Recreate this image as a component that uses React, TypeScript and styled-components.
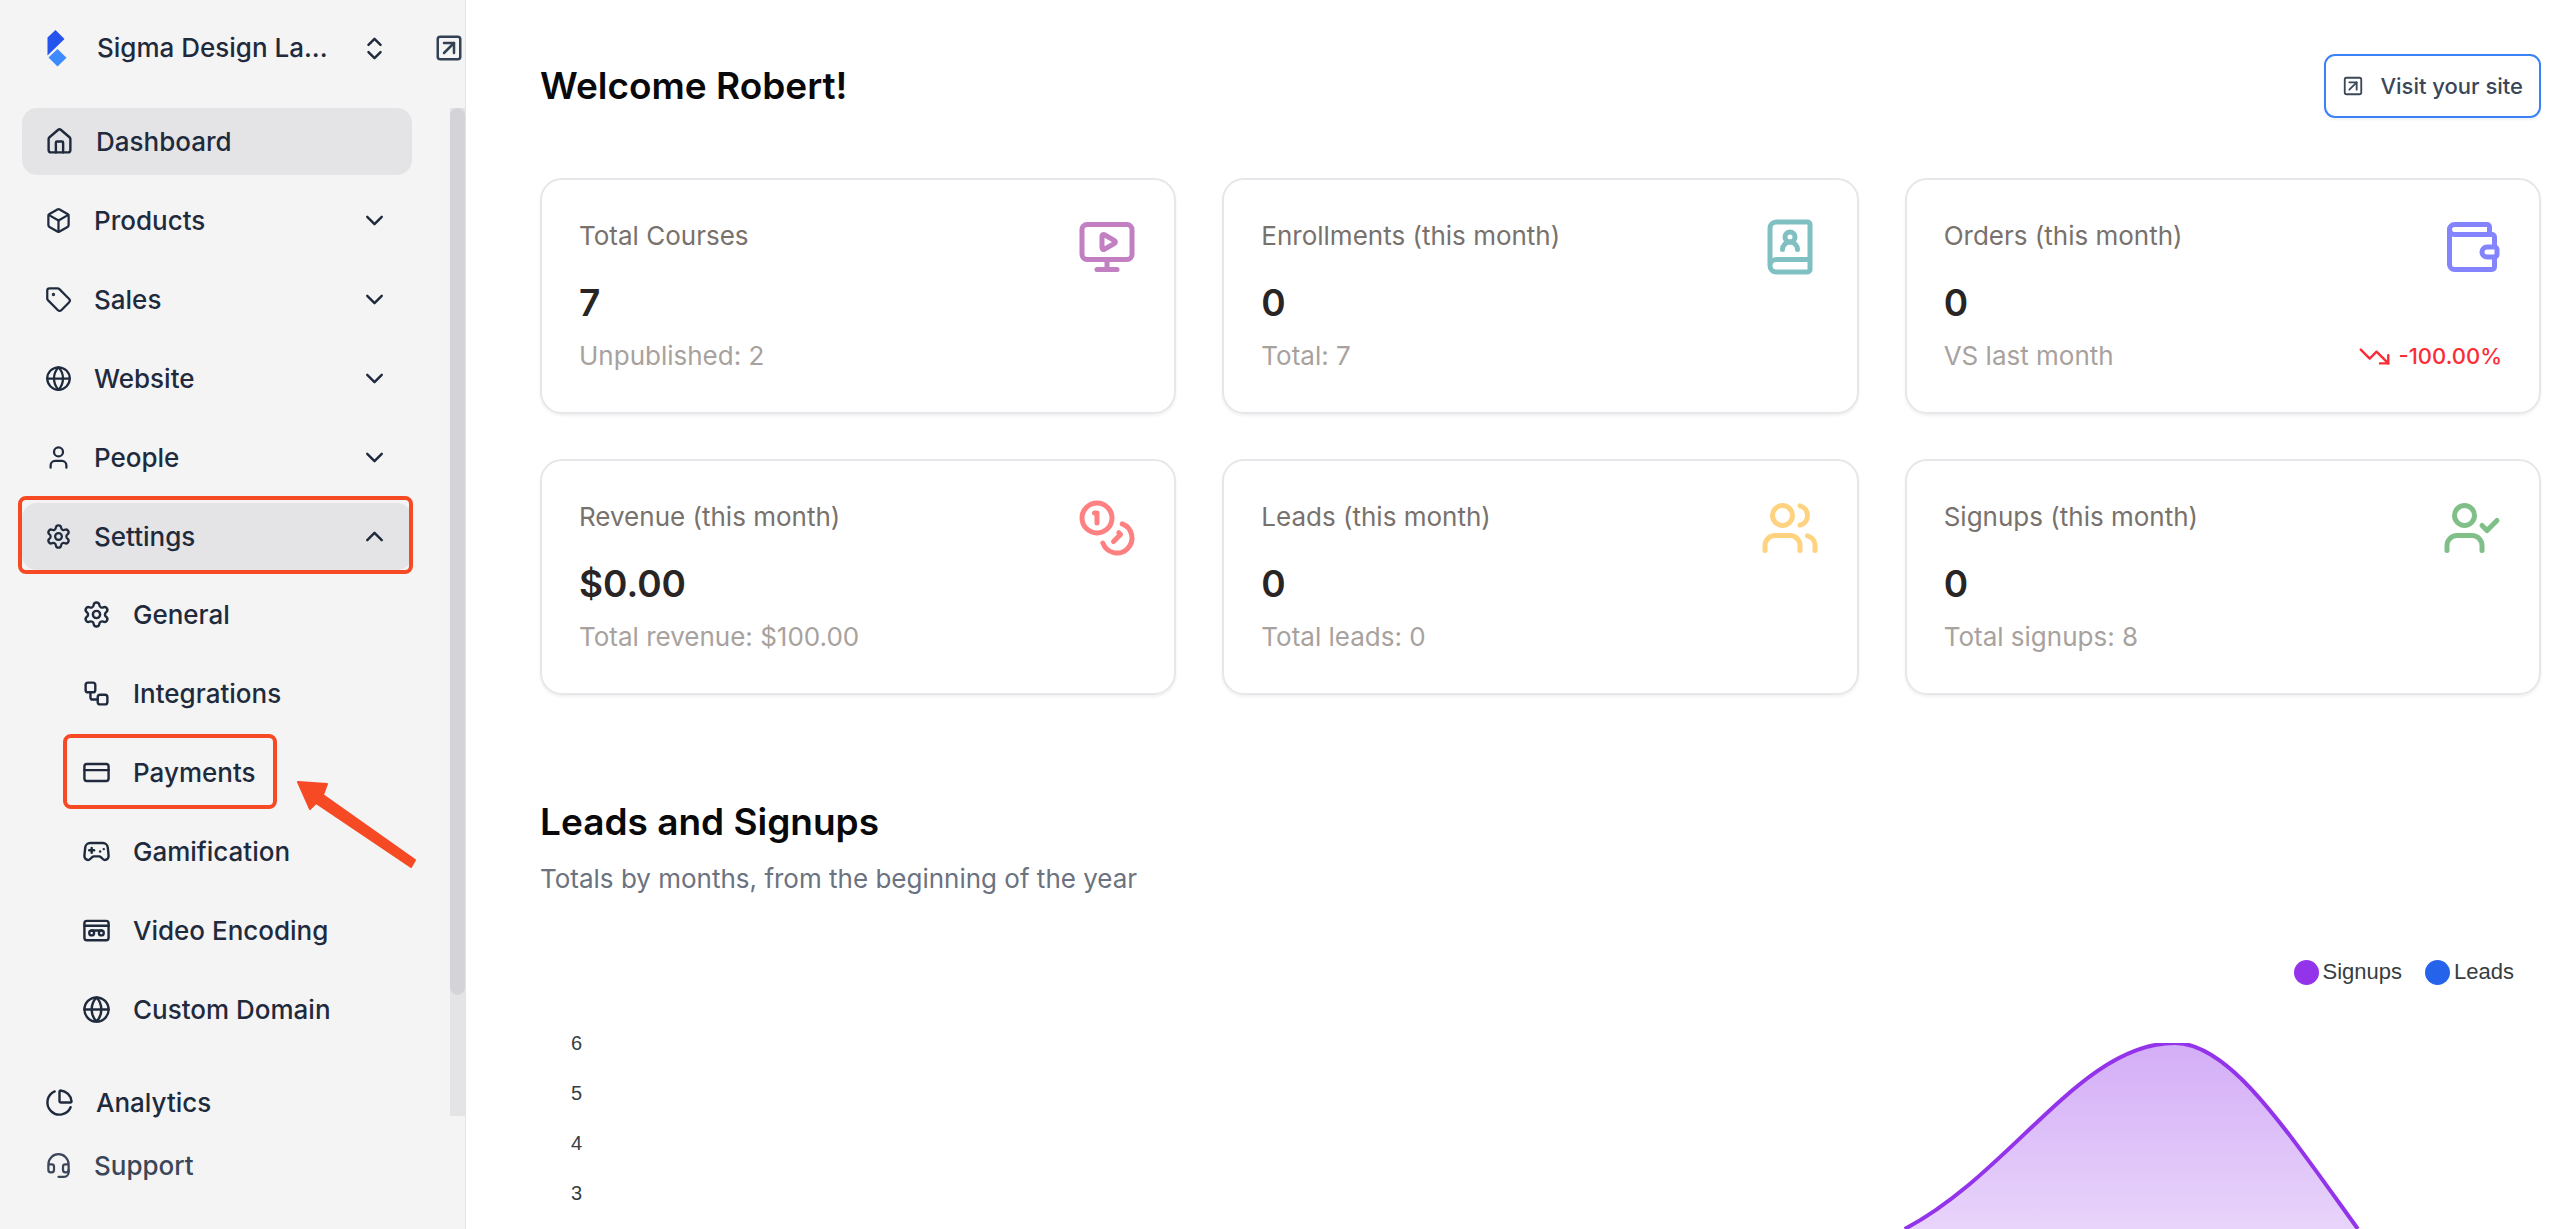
import React from "react";
import styled, { createGlobalStyle } from "styled-components";
import {
  BookUser,
  Box,
  ChartPie,
  ChevronDown,
  ChevronUp,
  ChevronsUpDown,
  CreditCard,
  Gamepad2,
  Globe,
  Headset,
  House,
  LucideIcon,
  MonitorPlay,
  Settings,
  SquareArrowUpRight,
  Tag,
  TrendingDown,
  User,
  UserCheck,
  Users,
  Videotape,
  Wallet,
  Workflow,
} from "lucide-react";

const GlobalStyle = createGlobalStyle`
  *, *::before, *::after { box-sizing: border-box; }
  body {
    margin: 0;
    background: #ffffff;
    font-family: Inter, "Liberation Sans", sans-serif;
    font-size: 26px;
    line-height: 38px;
    color: #1f2b3d;
  }
  h1, h2, p, ul { margin: 0; padding: 0; }
  ul { list-style: none; }
  button { font: inherit; color: inherit; border: 0; background: none; cursor: pointer; }
  a { color: inherit; text-decoration: none; }
  svg { display: block; flex: none; }
`;

const accent = "#f64a25";

const Page = styled.div`
  display: flex;
  height: 100vh;
  overflow: hidden;
`;

/* ---------- Sidebar ---------- */

const Sidebar = styled.aside`
  flex: none;
  width: 466px;
  display: flex;
  flex-direction: column;
  background: #f4f4f5;
  border-right: 1px solid #e4e4e7;
`;

const SidebarHeader = styled.div`
  display: flex;
  align-items: center;
  gap: 22px;
  height: 96px;
  padding-left: 22px;
  margin-bottom: 12px;
`;

const WorkspaceButton = styled.button`
  width: 390px;
  display: flex;
  align-items: center;
  gap: 30px;
  padding: 0 23px 0 25px;
  font-weight: 500;
  text-align: left;
`;

const IconLink = styled.a`
  color: #334155;
`;

const ScrollArea = styled.div`
  flex: 1;
  min-height: 0;
  display: flex;
  justify-content: space-between;
`;

const Nav = styled.nav`
  width: 412px;
  padding-left: 22px;
`;

const NavList = styled.ul`
  display: flex;
  flex-direction: column;
  gap: 12px;
`;

const SubList = styled(NavList)`
  padding: 11px 0 14px;
`;

const NavItem = styled.li`
  position: relative;
`;

const rowStyles = `
  display: flex;
  align-items: center;
  gap: 22px;
  width: 100%;
  height: 67px;
  border-radius: 15px;
  font-weight: 500;
  text-align: left;
`;

const NavLink = styled.a<{ $active?: boolean; $nested?: boolean; $muted?: boolean }>`
  ${rowStyles}
  padding: 0 23px 0 ${(p) => (p.$nested ? 60 : 23)}px;
  background: ${(p) => (p.$active ? "#e4e4e7" : "transparent")};
  color: ${(p) => (p.$muted ? "#3b4759" : "inherit")};
`;

const NavToggle = styled.button<{ $active?: boolean }>`
  ${rowStyles}
  padding: 0 23px;
  background: ${(p) => (p.$active ? "#e4e4e7" : "transparent")};
`;

const NavLabel = styled.span`
  flex: 1;
  white-space: nowrap;
`;

const Highlight = styled.span`
  position: absolute;
  border: 4px solid ${accent};
  border-radius: 8px;
  pointer-events: none;
`;

const GroupHighlight = styled(Highlight)`
  top: -7px;
  left: -4px;
  right: -1px;
  height: 78px;
`;

const LinkHighlight = styled(Highlight)`
  top: -5px;
  bottom: -3px;
  left: 41px;
  width: 214px;
`;

const Pointer = styled.svg`
  position: absolute;
  left: 274px;
  top: 41px;
  pointer-events: none;
`;

const ScrollTrack = styled.div`
  width: 15px;
  background: #e4e4e7;
`;

const ScrollThumb = styled.div`
  height: 88%;
  border-radius: 8px;
  background: #d4d4d8;
`;

const SidebarFooter = styled.div`
  width: 412px;
  padding: 16px 0 30px 22px;
`;

/* ---------- Main ---------- */

const Main = styled.main`
  flex: 1;
  min-width: 0;
  padding: 54px 19px 0 74px;
  overflow: hidden;
`;

const PageHeader = styled.header`
  display: flex;
  align-items: center;
  justify-content: space-between;
  margin-bottom: 60px;
`;

const Title = styled.h1`
  font-size: 37px;
  line-height: 48px;
  font-weight: 600;
  color: #09090b;
`;

const SiteLink = styled.a`
  display: flex;
  align-items: center;
  gap: 16px;
  height: 64px;
  padding: 0 16px;
  border: 2px solid #3b82f6;
  border-radius: 11px;
  box-shadow: 0 2px 3px rgba(0, 0, 0, 0.05);
  font-size: 22px;
  font-weight: 500;
  color: #3b4759;
`;

const CardGrid = styled.section`
  display: grid;
  grid-template-columns: repeat(3, 1fr);
  gap: 45px 46px;
`;

const Card = styled.article`
  display: flex;
  flex-direction: column;
  padding: 37px;
  border: 2px solid #e7e7eb;
  border-radius: 22px;
  box-shadow: 0 2px 3px rgba(0, 0, 0, 0.06);
`;

const CardTop = styled.div`
  display: flex;
  justify-content: space-between;
  height: 62px;
  color: #78716c;
`;

const CardValue = styled.p`
  margin-bottom: 10px;
  font-size: 37px;
  line-height: 48px;
  font-weight: 600;
  color: #292524;
`;

const CardBottom = styled.div`
  display: flex;
  justify-content: space-between;
  color: #a8a29e;
`;

const Trend = styled.span`
  display: flex;
  align-items: center;
  gap: 8px;
  font-size: 22px;
  font-weight: 500;
  color: #fb2c36;
`;

const ChartSection = styled.section`
  margin-top: 103px;
`;

const ChartNote = styled.p`
  margin-top: 14px;
  color: #6b7280;
`;

const Legend = styled.ul`
  display: flex;
  justify-content: flex-end;
  gap: 23px;
  margin: 61px 27px 33px 0;
  font: 22px/26px "Liberation Sans", Arial, sans-serif;
  color: #373d3f;
`;

const LegendItem = styled.li`
  display: flex;
  align-items: center;
  gap: 4px;
`;

const Dot = styled.span<{ $color: string }>`
  width: 25px;
  height: 25px;
  border-radius: 50%;
  background: ${(p) => p.$color};
`;

const Chart = styled.div`
  display: flex;
`;

const Axis = styled.ul`
  width: 60px;
  padding-left: 31px;
  font: 20px/50px "Liberation Sans", Arial, sans-serif;
  color: #373d3f;
`;

const Plot = styled.svg`
  flex: 1;
  min-width: 0;
  height: 186px;
  margin-top: 25px;
`;

const Glyph = ({ icon: Icon, size = 29 }: { icon: LucideIcon; size?: number }) => (
  <Icon size={size} strokeWidth={2} aria-hidden />
);

const Logo = () => (
  <svg width="20" height="37" viewBox="0 0 20 37" aria-hidden>
    <path d="M0.5 7.5 8.5 0 17.5 9 0.5 25.5Z" fill="#2453ee" />
    <path d="M10.5 19 19.5 27.8 10.5 36.5 1.5 27.5Z" fill="#3d8bff" />
  </svg>
);

const Coins = ({ size = 60, color }: { size?: number; color?: string }) => (
  <svg
    width={size}
    height={size}
    viewBox="0 0 24 24"
    fill="none"
    stroke={color}
    strokeWidth="2"
    strokeLinecap="round"
    strokeLinejoin="round"
    aria-hidden
  >
    <circle cx="8" cy="8" r="6" />
    <path d="M18.09 10.37A6 6 0 1 1 10.34 18" />
    <path d="M7 6h1v4" />
    <path d="m16.71 13.88.7.71-2.82 2.82" />
  </svg>
);

const groups: { label: string; icon: LucideIcon }[] = [
  { label: "Products", icon: Box },
  { label: "Sales", icon: Tag },
  { label: "Website", icon: Globe },
  { label: "People", icon: User },
];

const settings: { label: string; icon: LucideIcon }[] = [
  { label: "General", icon: Settings },
  { label: "Integrations", icon: Workflow },
  { label: "Payments", icon: CreditCard },
  { label: "Gamification", icon: Gamepad2 },
  { label: "Video Encoding", icon: Videotape },
  { label: "Custom Domain", icon: Globe },
];

const stats = [
  { label: "Total Courses", value: "7", note: "Unpublished: 2", icon: MonitorPlay, color: "#c27fc2" },
  { label: "Enrollments (this month)", value: "0", note: "Total: 7", icon: BookUser, color: "#80c0c2" },
  { label: "Orders (this month)", value: "0", note: "VS last month", icon: Wallet, color: "#8484ff", trend: "-100.00%" },
  { label: "Revenue (this month)", value: "$0.00", note: "Total revenue: $100.00", icon: Coins, color: "#ff8080" },
  { label: "Leads (this month)", value: "0", note: "Total leads: 0", icon: Users, color: "#ffd280" },
  { label: "Signups (this month)", value: "0", note: "Total signups: 8", icon: UserCheck, color: "#80c088" },
];

const curve = "M1304 186C1412 129 1480 0 1574 0C1628 0 1682 82 1757 186";

export default function App() {
  return (
    <>
      <GlobalStyle />
      <Page>
        <Sidebar>
          <SidebarHeader>
            <WorkspaceButton type="button">
              <Logo />
              <NavLabel>Sigma Design La...</NavLabel>
              <Glyph icon={ChevronsUpDown} />
            </WorkspaceButton>
            <IconLink href="#site" aria-label="Open site">
              <Glyph icon={SquareArrowUpRight} size={30} />
            </IconLink>
          </SidebarHeader>
          <ScrollArea>
            <Nav>
              <NavList>
                <NavItem>
                  <NavLink href="#dashboard" $active>
                    <Glyph icon={House} />
                    <NavLabel>Dashboard</NavLabel>
                  </NavLink>
                </NavItem>
                {groups.map((g) => (
                  <NavItem key={g.label}>
                    <NavToggle type="button" aria-expanded={false}>
                      <Glyph icon={g.icon} size={27} />
                      <NavLabel>{g.label}</NavLabel>
                      <Glyph icon={ChevronDown} />
                    </NavToggle>
                  </NavItem>
                ))}
                <NavItem>
                  <NavToggle type="button" aria-expanded $active>
                    <Glyph icon={Settings} size={27} />
                    <NavLabel>Settings</NavLabel>
                    <Glyph icon={ChevronUp} />
                  </NavToggle>
                  <GroupHighlight />
                  <SubList>
                    {settings.map((s) => (
                      <NavItem key={s.label}>
                        <NavLink href={`#${s.label}`} $nested>
                          <Glyph icon={s.icon} />
                          <NavLabel>{s.label}</NavLabel>
                        </NavLink>
                        {s.label === "Payments" && (
                          <>
                            <LinkHighlight />
                            <Pointer width="122" height="92" viewBox="0 0 122 92" aria-hidden>
                              <path
                                d="M2 2 31 4 27 15 119 80 115 87 20 23 14 29Z"
                                fill={accent}
                                stroke={accent}
                                strokeWidth="2"
                                strokeLinejoin="round"
                              />
                            </Pointer>
                          </>
                        )}
                      </NavItem>
                    ))}
                  </SubList>
                </NavItem>
                <NavItem>
                  <NavLink href="#analytics">
                    <Glyph icon={ChartPie} />
                    <NavLabel>Analytics</NavLabel>
                  </NavLink>
                </NavItem>
              </NavList>
            </Nav>
            <ScrollTrack>
              <ScrollThumb />
            </ScrollTrack>
          </ScrollArea>
          <SidebarFooter>
            <NavLink href="#support" $muted>
              <Glyph icon={Headset} size={27} />
              <NavLabel>Support</NavLabel>
            </NavLink>
          </SidebarFooter>
        </Sidebar>

        <Main>
          <PageHeader>
            <Title>Welcome Robert!</Title>
            <SiteLink href="#site">
              <Glyph icon={SquareArrowUpRight} size={22} />
              Visit your site
            </SiteLink>
          </PageHeader>

          <CardGrid>
            {stats.map((s) => (
              <Card key={s.label}>
                <CardTop>
                  <span>{s.label}</span>
                  <s.icon size={60} color={s.color} />
                </CardTop>
                <CardValue>{s.value}</CardValue>
                <CardBottom>
                  <span>{s.note}</span>
                  {s.trend && (
                    <Trend>
                      <TrendingDown size={33} strokeWidth={1.75} aria-hidden />
                      {s.trend}
                    </Trend>
                  )}
                </CardBottom>
              </Card>
            ))}
          </CardGrid>

          <ChartSection>
            <Title as="h2">Leads and Signups</Title>
            <ChartNote>Totals by months, from the beginning of the year</ChartNote>
            <Legend>
              <LegendItem>
                <Dot $color="#9333ea" />
                Signups
              </LegendItem>
              <LegendItem>
                <Dot $color="#2563eb" />
                Leads
              </LegendItem>
            </Legend>
            <Chart>
              <Axis>
                {[6, 5, 4, 3].map((n) => (
                  <li key={n}>{n}</li>
                ))}
              </Axis>
              <Plot viewBox="0 0 1940 186" preserveAspectRatio="none" role="img" aria-label="Signups by month">
                <defs>
                  <linearGradient id="signups" x1="0" y1="0" x2="0" y2="1">
                    <stop offset="0" stopColor="#9333ea" stopOpacity="0.4" />
                    <stop offset="1" stopColor="#9333ea" stopOpacity="0.21" />
                  </linearGradient>
                </defs>
                <path d={`${curve}Z`} fill="url(#signups)" />
                <path d={curve} fill="none" stroke="#9333ea" strokeWidth="4" vectorEffect="non-scaling-stroke" />
              </Plot>
            </Chart>
          </ChartSection>
        </Main>
      </Page>
    </>
  );
}
